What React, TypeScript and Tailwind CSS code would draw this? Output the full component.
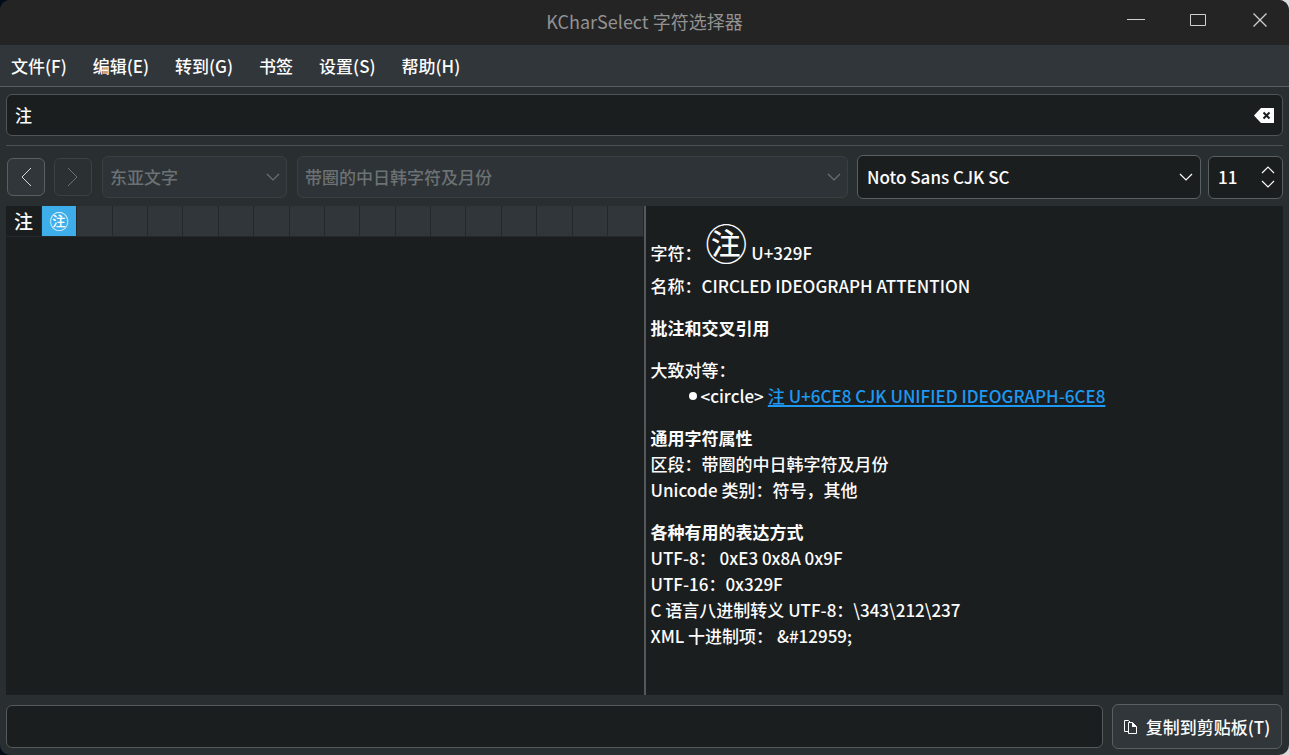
import { useState } from 'react'

const menus = ['文件(F)', '编辑(E)', '转到(G)', '书签', '设置(S)', '帮助(H)']

const columns = 18
const characters = ['注', '㊟']

const sections = [
  {
    title: '通用字符属性',
    lines: ['区段：带圈的中日韩字符及月份', 'Unicode 类别：符号，其他'],
  },
  {
    title: '各种有用的表达方式',
    lines: [
      'UTF-8： 0xE3 0x8A 0x9F',
      'UTF-16：0x329F',
      'C 语言八进制转义 UTF-8：\\343\\212\\237',
      'XML 十进制项： &#12959;',
    ],
  },
]

function Chevron({ className, d }: { className?: string; d: string }) {
  return (
    <svg
      viewBox="0 0 14 14"
      fill="none"
      stroke="currentColor"
      strokeWidth="1.2"
      className={`size-[14px] ${className ?? ''}`}
    >
      <path d={d} />
    </svg>
  )
}

const chevronDown = 'M1 4l6 6 6-6'
const chevronUp = 'M1 10l6-6 6 6'

function TitleBar() {
  return (
    <header className="grid grid-cols-[1fr_auto_1fr] h-[45px] bg-[#242424] text-[#d0d0d0]">
      <span />
      <h1 className="text-[18px] leading-[42px] font-normal text-[#929292]">
        KCharSelect 字符选择器
      </h1>
      <div className="flex justify-end items-start gap-[42px] pt-[10px] pr-[19px]">
        <button aria-label="最小化">
          <svg viewBox="0 0 20 20" className="size-5" fill="none" stroke="currentColor">
            <path d="M1 9.5h18" />
          </svg>
        </button>
        <button aria-label="最大化">
          <svg viewBox="0 0 20 20" className="size-5" fill="none" stroke="currentColor">
            <path d="M2.5 4.5h15v11h-15z" />
          </svg>
        </button>
        <button aria-label="关闭">
          <svg
            viewBox="0 0 20 20"
            className="size-5"
            fill="none"
            stroke="currentColor"
            strokeWidth="1.3"
          >
            <path d="M3.5 3.5l13 13M16.5 3.5l-13 13" />
          </svg>
        </button>
      </div>
    </header>
  )
}

function DisabledSelect({
  label,
  value,
  className,
}: {
  label: string
  value: string
  className: string
}) {
  return (
    <div className={`relative ${className}`}>
      <select
        aria-label={label}
        disabled
        className="appearance-none w-full h-[42px] pl-[7px] pr-8 rounded-md border border-[#3a3f42] bg-[#2d3336] text-[#6c7173] opacity-100"
      >
        <option>{value}</option>
      </select>
      <Chevron
        d={chevronDown}
        className="absolute right-[7px] top-[14px] text-[#6c7173] pointer-events-none"
      />
    </div>
  )
}

export default function App() {
  const [search, setSearch] = useState('注')
  const [selected, setSelected] = useState('㊟')
  const [size, setSize] = useState(11)
  const [text, setText] = useState('')

  return (
    <div className="bg-linear-to-r from-[#020b1a] to-[#dcdcdc]">
      <div
        lang="zh-CN"
        className="flex flex-col min-h-screen rounded-[10px] overflow-hidden bg-[#292e31] text-[#fcfcfc] text-[17px] font-medium font-['Noto_Sans_CJK_SC',sans-serif]"
      >
        <TitleBar />

        <nav className="flex items-center gap-[26px] h-[42px] px-[11px] bg-[#31363a] border-b border-[#5a5f62]">
          {menus.map((menu) => (
            <button key={menu}>{menu}</button>
          ))}
        </nav>

        <div className="mx-[6px] mt-[7px] pb-[9px] border-b border-[#4b5053]">
          <div className="flex items-center h-[42px] px-2 rounded-md border border-[#4f5457] bg-[#1b1e1f]">
            <input
              type="text"
              aria-label="搜索"
              value={search}
              onChange={(e) => setSearch(e.target.value)}
              className="flex-1 min-w-0 outline-none"
            />
            <button aria-label="清除" onClick={() => setSearch('')}>
              <svg viewBox="0 0 20 15" className="w-5 h-[15px]">
                <path d="M0 7.5L7 0h13v15H7z" fill="#fcfcfc" />
                <path d="M9.5 4.5l6 6M15.5 4.5l-6 6" stroke="#1b1e1f" strokeWidth="2" />
              </svg>
            </button>
          </div>
        </div>

        <div className="flex items-center pl-[7px] pr-[6px] pt-[9px] pb-[7px]">
          <button
            aria-label="后退"
            className="flex items-center justify-center size-[38px] mr-[9px] rounded-md border border-[#5a5f62] bg-[#31363a] text-[#d6d8d9]"
          >
            <svg viewBox="0 0 20 20" className="size-5" fill="none" stroke="currentColor">
              <path d="M15 1l-9 9 9 9" />
            </svg>
          </button>
          <button
            aria-label="前进"
            disabled
            className="flex items-center justify-center size-[38px] mr-[10px] rounded-md border border-[#3c4144] bg-[#2b3033] text-[#6c7173]"
          >
            <svg viewBox="0 0 20 20" className="size-5" fill="none" stroke="currentColor">
              <path d="M5 1l9 9-9 9" />
            </svg>
          </button>
          <DisabledSelect label="文字" value="东亚文字" className="w-[185px] mr-[10px]" />
          <DisabledSelect
            label="区段"
            value="带圈的中日韩字符及月份"
            className="flex-1 mr-[9px]"
          />
          <div className="relative w-[344px] mr-[7px]">
            <select
              aria-label="字体"
              className="appearance-none w-full h-11 pl-[9px] pr-8 rounded-md border border-[#5a5f62] bg-[#1b1e1f]"
            >
              <option>Noto Sans CJK SC</option>
            </select>
            <Chevron
              d={chevronDown}
              className="absolute right-2 top-[15px] pointer-events-none"
            />
          </div>
          <div className="flex items-center w-[75px] h-[43px] pl-[9px] pr-[7px] rounded-md border border-[#5a5f62] bg-[#1b1e1f]">
            <input
              type="text"
              inputMode="numeric"
              aria-label="字号"
              value={size}
              onChange={(e) => setSize(Number(e.target.value) || 0)}
              className="flex-1 min-w-0 outline-none"
            />
            <div className="flex flex-col">
              <button aria-label="增大" onClick={() => setSize(size + 1)}>
                <Chevron d={chevronUp} />
              </button>
              <button aria-label="减小" onClick={() => setSize(size - 1)}>
                <Chevron d={chevronDown} />
              </button>
            </div>
          </div>
        </div>

        <main className="flex flex-1 mx-[6px] bg-[#1b1e1f]">
          <div className="flex-1 min-w-0">
            <table className="w-full table-fixed border-collapse">
              <tbody>
                <tr className="bg-[#31363a]">
                  {Array.from({ length: columns }, (_, index) => {
                    const character = characters[index]
                    if (!character) {
                      return (
                        <td
                          key={index}
                          className="border-r border-b border-[#24282a]"
                        ></td>
                      )
                    }
                    return (
                      <td
                        key={index}
                        className={`p-0 border-r border-b border-[#24282a] ${
                          character === selected ? 'bg-[#3daee9]' : 'bg-[#1b1e1f]'
                        }`}
                      >
                        <button
                          onClick={() => setSelected(character)}
                          className="block w-full text-[19px] leading-[30px] text-center"
                        >
                          {character}
                        </button>
                      </td>
                    )
                  })}
                </tr>
              </tbody>
            </table>
          </div>

          <div className="w-[2px] bg-[#54585a]" />

          <div className="flex-1 min-w-0 pt-[15px] leading-[26px]">
            <div className="pl-[5px]">
              <p className="h-[52px] leading-[52px]">
                字符： <span className="text-[42px] leading-none font-normal">㊟</span> U+329F
              </p>
              <p>名称：CIRCLED IDEOGRAPH ATTENTION</p>
              <h2 className="mt-4 font-bold">批注和交叉引用</h2>
              <p className="mt-4">大致对等：</p>
              <ul className="pl-[38px]">
                <li className="flex items-center gap-1 before:size-2 before:rounded-full before:bg-[#fcfcfc]">
                  &lt;circle&gt;
                  <a
                    href="#U+6CE8"
                    className="text-[#1d99f3] underline decoration-2 underline-offset-2"
                  >
                    注 U+6CE8 CJK UNIFIED IDEOGRAPH-6CE8
                  </a>
                </li>
              </ul>
              {sections.map((section) => (
                <section key={section.title} className="mt-4">
                  <h2 className="font-bold">{section.title}</h2>
                  {section.lines.map((line) => (
                    <p key={line}>{line}</p>
                  ))}
                </section>
              ))}
            </div>
          </div>
        </main>

        <footer className="flex items-center gap-[9px] pl-[6px] pr-[7px] pt-[9px] pb-[6px]">
          <input
            type="text"
            aria-label="要复制的文字"
            value={text}
            onChange={(e) => setText(e.target.value)}
            className="flex-1 min-w-0 h-[43px] px-[9px] rounded-md border border-[#54595c] bg-[#1b1e1f] outline-none"
          />
          <button className="flex items-center justify-center gap-2 w-[170px] h-[45px] rounded-md border border-[#5a5f62] bg-[#31363a]">
            <svg viewBox="0 0 14 16" className="w-[14px] h-4" fill="none" stroke="currentColor">
              <path d="M4.500 12.500h-4v-11h4l2 2" />
              <path d="M4.500 3.500h4l4 4v7h-8z" />
              <path d="M8 3v5h5z" fill="currentColor" stroke="none" />
            </svg>
            复制到剪贴板(T)
          </button>
        </footer>
      </div>
    </div>
  )
}
